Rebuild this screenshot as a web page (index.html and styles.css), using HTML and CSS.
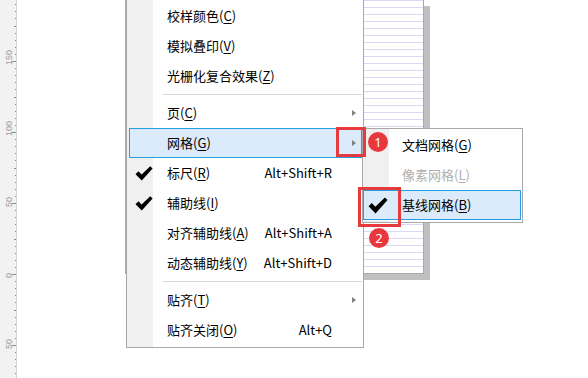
FILE: index.html
```html
<!DOCTYPE html>
<html lang="zh-CN">
<head>
    <meta charset="UTF-8">
    <meta name="viewport" content="width=device-width, initial-scale=1.0">
    <title>视图菜单 - 网格</title>
    <link rel="stylesheet" href="styles.css">
</head>
<body>
    <div class="app">
        <div class="ruler">
            <svg id="ruler" width="17" height="378"></svg>
        </div>
        <div class="canvas">
            <div class="page"></div>
        </div>

        <div class="menu">
            <div class="item"><span class="icon"></span><span class="label">校样颜色(<u>C</u>)</span><span class="key"></span><span class="more"></span></div>
            <div class="item"><span class="icon"></span><span class="label">模拟叠印(<u>V</u>)</span><span class="key"></span><span class="more"></span></div>
            <div class="item"><span class="icon"></span><span class="label">光栅化复合效果(<u>Z</u>)</span><span class="key"></span><span class="more"></span></div>
            <div class="sep"></div>
            <div class="item"><span class="icon"></span><span class="label">页(<u>C</u>)</span><span class="key"></span><span class="more"><i class="arrow"></i></span></div>
            <div class="item active"><span class="icon"></span><span class="label">网格(<u>G</u>)</span><span class="key"></span><span class="more"><i class="arrow"></i></span></div>
            <div class="item">
                <span class="icon">
                    <svg class="check" width="18" height="15" viewBox="0 0 18 15"><path d="M0.5 8.2 L3.4 5.3 L6.6 8.6 L15.2 0.2 L17.6 2.6 L6.8 14.6 Z"/></svg>
                </span>
                <span class="label">标尺(<u>R</u>)</span><span class="key">Alt+Shift+R</span><span class="more"></span>
            </div>
            <div class="item">
                <span class="icon">
                    <svg class="check" width="18" height="15" viewBox="0 0 18 15"><path d="M0.5 8.2 L3.4 5.3 L6.6 8.6 L15.2 0.2 L17.6 2.6 L6.8 14.6 Z"/></svg>
                </span>
                <span class="label">辅助线(<u>I</u>)</span><span class="key"></span><span class="more"></span>
            </div>
            <div class="item"><span class="icon"></span><span class="label">对齐辅助线(<u>A</u>)</span><span class="key">Alt+Shift+A</span><span class="more"></span></div>
            <div class="item"><span class="icon"></span><span class="label">动态辅助线(<u>Y</u>)</span><span class="key">Alt+Shift+D</span><span class="more"></span></div>
            <div class="sep"></div>
            <div class="item"><span class="icon"></span><span class="label">贴齐(<u>T</u>)</span><span class="key"></span><span class="more"><i class="arrow"></i></span></div>
            <div class="item"><span class="icon"></span><span class="label">贴齐关闭(<u>O</u>)</span><span class="key">Alt+Q</span><span class="more"></span></div>
        </div>

        <div class="submenu">
            <div class="item"><span class="icon"></span><span class="label">文档网格(<u>G</u>)</span></div>
            <div class="item disabled"><span class="icon"></span><span class="label">像素网格(<u>L</u>)</span></div>
            <div class="item active">
                <span class="icon">
                    <svg class="check" width="20" height="17" viewBox="0 0 18 15"><path d="M0.5 8.2 L3.4 5.3 L6.6 8.6 L15.2 0.2 L17.6 2.6 L6.8 14.6 Z"/></svg>
                </span>
                <span class="label">基线网格(<u>B</u>)</span>
            </div>
        </div>

        <div class="mark mark-arrow"></div>
        <div class="mark mark-check"></div>
        <span class="badge badge-1">1</span>
        <span class="badge badge-2">2</span>
    </div>

    <script>
        // vertical ruler: a tick every 5 units, 0 sits at y = 274
        const ruler = document.getElementById('ruler');
        const step = 7.1;
        let marks = '';
        for (let k = -40; k <= 20; k++) {
            const y = Math.round(274 + k * step);
            if (y < 0 || y > 378) continue;
            const m = ((k % 10) + 10) % 10;
            let x = 15;
            if (m === 0) x = 12;
            else if (m === 5) x = 14;
            marks += `<rect x="${x}" y="${y}" width="${16 - x}" height="1"/>`;
            if (m === 0) {
                marks += `<text transform="translate(11.5, ${y + 4}) rotate(-90)">${Math.abs(k * 5)}</text>`;
            }
        }
        ruler.innerHTML = marks;
    </script>
</body>
</html>
```

FILE: styles.css
```css
body {
    margin: 0;
    padding: 0;
    background-color: #fff;
    font-family: 'Noto Sans CJK SC', 'Noto Sans', sans-serif;
    font-size: 13px;
    color: #000;
    overflow: hidden;
}

.app {
    position: relative;
    display: flex;
    width: 588px;
    height: 378px;
    overflow: hidden;
}

.ruler {
    width: 16px;
    flex: none;
    background-color: #f2f2f2;
    border-right: 1px solid #d2d2d2;
}

.ruler svg {
    display: block;
    fill: #8c8c8c;
}

.ruler text {
    font-family: 'Liberation Sans', sans-serif;
    font-size: 9px;
    fill: #9a9a9a;
}

.canvas {
    position: relative;
    flex: 1;
}

/* document page with baseline grid */
.page {
    position: absolute;
    left: 108px;
    top: 0;
    width: 299px;
    height: 274px;
    box-sizing: border-box;
    border: 1px solid #a9a9a9;
    border-top: none;
    background-color: #fff;
    background-image: linear-gradient(to bottom, #dcd7f4 0, #dcd7f4 1px, transparent 1px);
    background-size: 100% 7px;
    box-shadow: 6px 6px 0 #c0c0c0;
}

/* context menus */
.menu,
.submenu {
    position: absolute;
    box-sizing: border-box;
    border: 1px solid #a8a8a8;
    background: linear-gradient(to right, #f0f0f0 0, #f0f0f0 26px, #fff 26px);
}

.menu {
    left: 126px;
    top: -2px;
    width: 238px;
    padding: 2px 1px 2px 2px;
}

.submenu {
    left: 362px;
    top: 128px;
    width: 161px;
    padding: 1px 1px 2px 0;
}

.item {
    display: flex;
    align-items: center;
    height: 30px;
    box-sizing: border-box;
    border: 1px solid transparent;
    line-height: 28px;
    white-space: nowrap;
}

.item.active {
    background-color: #dbebfb;
    border-color: #26a0e4;
}

.item.disabled {
    color: #b0b0b0;
}

.item u {
    text-underline-offset: 2px;
}

.icon {
    display: flex;
    align-items: center;
    width: 37px;
    height: 28px;
    flex: none;
    box-sizing: border-box;
    padding-left: 5px;
}

.submenu .icon {
    width: 38px;
    padding-left: 4px;
}

.check {
    display: block;
    fill: #000;
}

.label {
    flex: 1;
}

.key {
    text-align: right;
}

.more {
    display: flex;
    align-items: center;
    justify-content: flex-end;
    width: 29px;
    height: 28px;
    flex: none;
    box-sizing: border-box;
    padding-right: 5px;
}

.arrow {
    display: block;
    width: 0;
    height: 0;
    border-left: 4px solid #808080;
    border-top: 3.5px solid transparent;
    border-bottom: 3.5px solid transparent;
}

.sep {
    height: 1px;
    margin: 3px 0 3px 34px;
    background-color: #d7d7d7;
}

/* red annotations */
.mark {
    position: absolute;
    box-sizing: border-box;
    border: 3px solid #e63a3d;
}

.mark-arrow {
    left: 336px;
    top: 127px;
    width: 30px;
    height: 30px;
}

.mark-check {
    left: 358px;
    top: 187px;
    width: 43px;
    height: 40px;
}

.badge {
    position: absolute;
    width: 20px;
    height: 20px;
    border-radius: 50%;
    background-color: #e8383d;
    color: #fff;
    font-family: 'Noto Sans', sans-serif;
    font-size: 13px;
    line-height: 20px;
    text-align: center;
}

.badge-1 {
    left: 368px;
    top: 132px;
}

.badge-2 {
    left: 369px;
    top: 228px;
}
```
